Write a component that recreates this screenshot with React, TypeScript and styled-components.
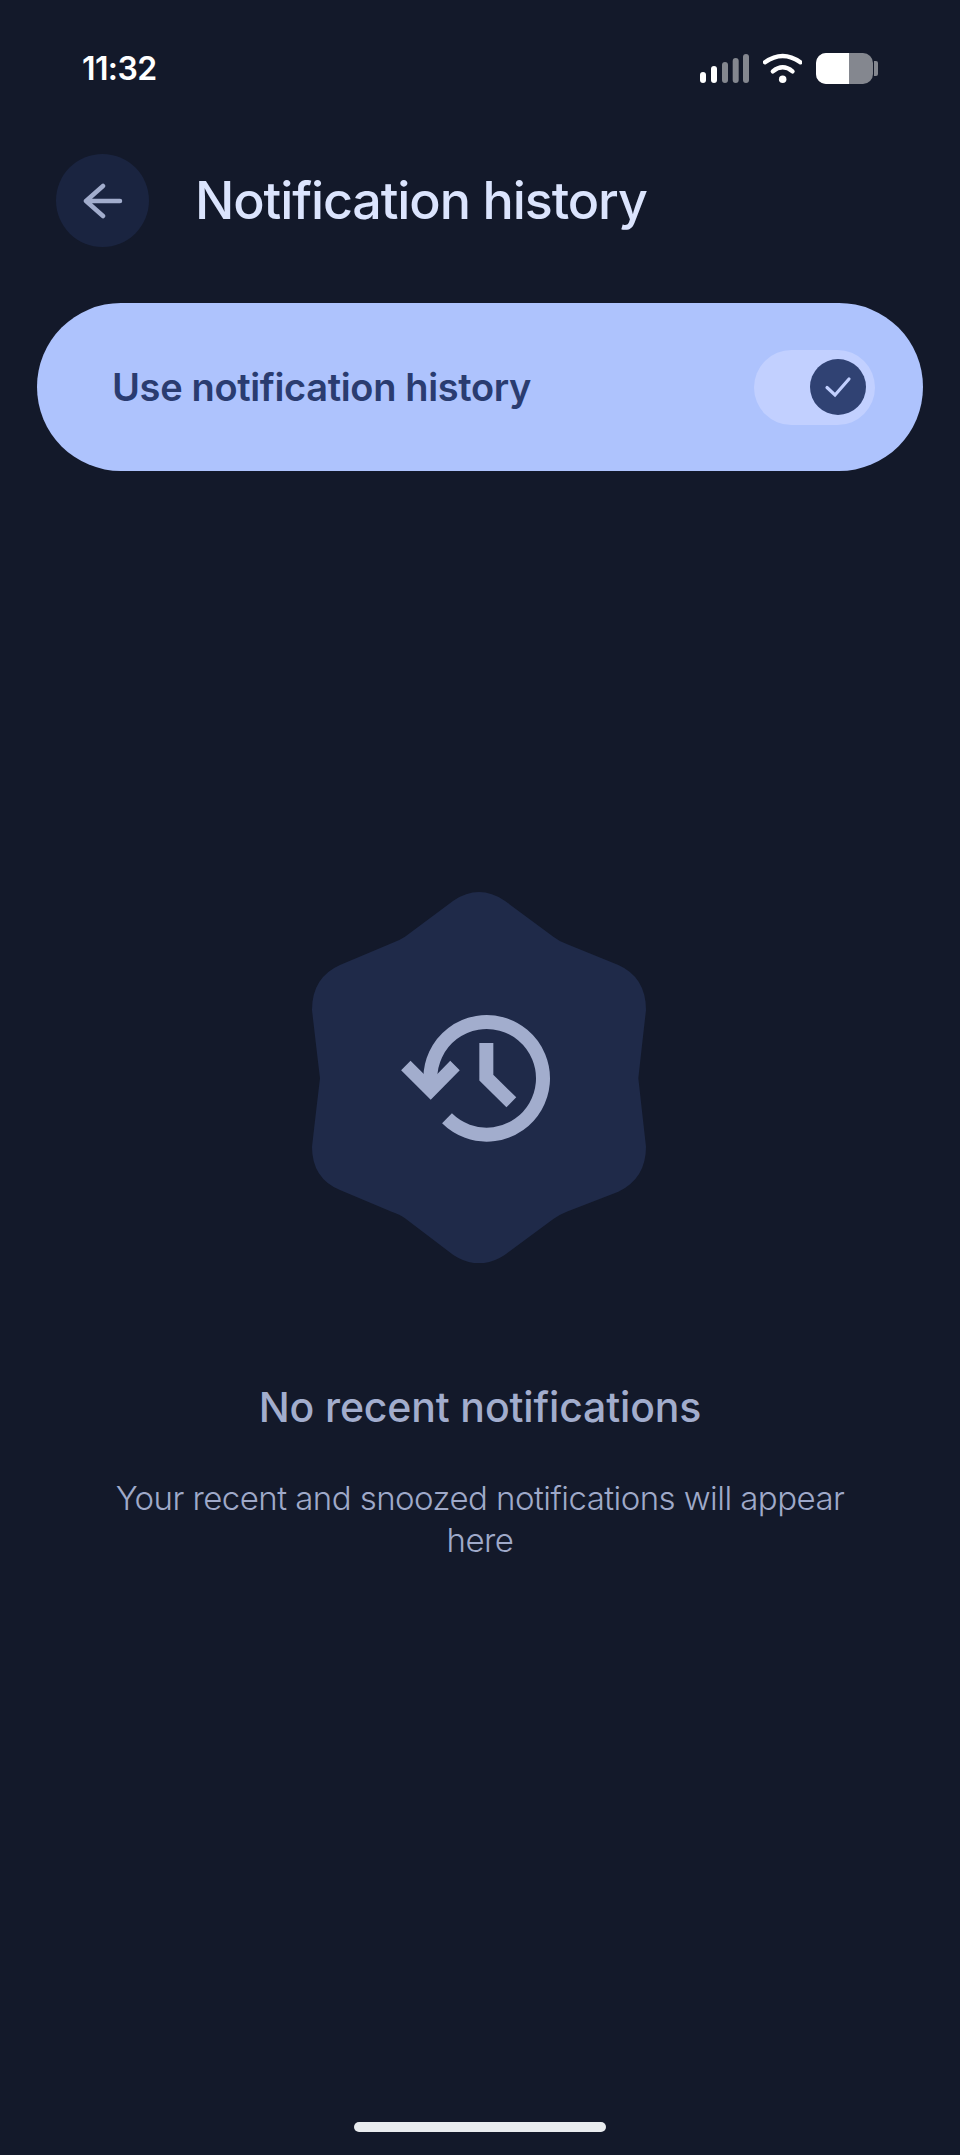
import React from "react";
import styled, { createGlobalStyle } from "styled-components";

const GlobalStyle = createGlobalStyle`
	html, body {
		margin: 0;
		padding: 0;
		background: #13192a;
	}
`;

const Screen = styled.div`
	width: 960px;
	height: 2155px;
	display: flex;
	flex-direction: column;
	align-items: stretch;
	background: #13192a;
	font-family: "Inter", "Liberation Sans", sans-serif;
	overflow: hidden;
`;

const StatusBar = styled.div`
	height: 136px;
	padding: 0 82px;
	box-sizing: border-box;
	display: flex;
	align-items: center;
	justify-content: space-between;
`;

const Time = styled.span`
	font-size: 32px;
	font-weight: 600;
	letter-spacing: -0.6px;
	color: #ffffff;
`;

const StatusIcons = styled.div`
	display: flex;
	align-items: center;
	gap: 14px;
`;

const Battery = styled.div`
	display: flex;
	align-items: center;
	gap: 1px;
`;

const BatteryBody = styled.div`
	width: 57px;
	height: 31px;
	border-radius: 10px;
	overflow: hidden;
	display: flex;
	background: #84878f;
`;

const BatteryFill = styled.div<{ $level: number }>`
	width: ${(p) => p.$level}%;
	background: #ffffff;
`;

const BatteryNub = styled.div`
	width: 4px;
	height: 15px;
	border-radius: 0 2px 2px 0;
	background: #84878f;
`;

const Header = styled.header`
	margin-top: 18px;
	padding-left: 56px;
	display: flex;
	align-items: center;
	gap: 46px;
`;

const BackButton = styled.div`
	width: 93px;
	height: 93px;
	border-radius: 50%;
	background: #1a2440;
	display: flex;
	align-items: center;
	justify-content: center;
`;

const Title = styled.h1`
	margin: 0;
	font-size: 52px;
	font-weight: 450;
	letter-spacing: -1.1px;
	line-height: 93px;
	color: #dbe4fd;
`;

const ToggleCard = styled.div`
	margin: 56px 37px 0;
	height: 168px;
	padding: 0 48px 0 75px;
	border-radius: 84px;
	background: #aec3fd;
	display: flex;
	align-items: center;
	justify-content: space-between;
`;

const ToggleLabel = styled.span`
	font-size: 38px;
	font-weight: 600;
	letter-spacing: -0.35px;
	color: #2a3c70;
`;

const Switch = styled.div`
	width: 121px;
	height: 75px;
	padding-right: 9px;
	box-sizing: border-box;
	border-radius: 38px;
	background: #c2d0ff;
	display: flex;
	align-items: center;
	justify-content: flex-end;
`;

const Thumb = styled.div`
	width: 56px;
	height: 56px;
	border-radius: 50%;
	background: #304273;
	display: flex;
	align-items: center;
	justify-content: center;
`;

const EmptyState = styled.section`
	margin-top: 421px;
	display: flex;
	flex-direction: column;
	align-items: center;
`;

const Badge = styled.svg`
	width: 334px;
	height: 371px;
	margin-left: -2px;
`;

const EmptyTitle = styled.h2`
	margin: 119px 0 0;
	font-size: 41px;
	font-weight: 500;
	letter-spacing: -0.15px;
	line-height: 50px;
	color: #a2adcd;
`;

const EmptyText = styled.p`
	margin: 45px 0 0;
	width: 760px;
	font-size: 33px;
	font-weight: 300;
	letter-spacing: -0.55px;
	line-height: 42px;
	text-align: center;
	color: #9fa9c9;
`;

const HomeIndicator = styled.div`
	margin: auto auto 23px;
	width: 252px;
	height: 10px;
	border-radius: 5px;
	background: #e9ecef;
`;

const bars = [
	{ x: 0, h: 11, on: true },
	{ x: 11, h: 17, on: true },
	{ x: 22, h: 21, on: false },
	{ x: 32.7, h: 25, on: false },
	{ x: 43, h: 29, on: false },
];

const SignalIcon = () => (
	<svg width="49" height="29" viewBox="0 0 49 29">
		{bars.map((b) => (
			<rect
				key={b.x}
				x={b.x}
				y={29 - b.h}
				width="6"
				height={b.h}
				rx="3"
				fill={b.on ? "#ffffff" : "#84878f"}
			/>
		))}
	</svg>
);

const WifiIcon = () => (
	<svg width="39" height="30" viewBox="310 70 115 88" fill="none" stroke="#ffffff" strokeWidth="13" strokeLinecap="round">
		<path d="M316 97Q368 60 420 97" />
		<path d="M339 124Q368 100 397 124" />
		<circle cx="368" cy="147" r="11" fill="#ffffff" stroke="none" />
	</svg>
);

const BackIcon = () => (
	<svg width="40" height="36" viewBox="0 0 40 36" fill="none" stroke="#a2adcd" strokeWidth="4.5" strokeLinecap="round" strokeLinejoin="round">
		<path d="M37 18H3M20 3L3 18L20 33" />
	</svg>
);

const CheckIcon = () => (
	<svg width="28" height="22" viewBox="0 0 28 22" fill="none" stroke="#c2d0ff" strokeWidth="3.2" strokeLinecap="round" strokeLinejoin="miter">
		<path d="M3 11.5L11 19L25 3" />
	</svg>
);

const App: React.FC = () => {
	return (
		<Screen>
			<GlobalStyle />
			<StatusBar>
				<Time>11:32</Time>
				<StatusIcons>
					<SignalIcon />
					<WifiIcon />
					<Battery>
						<BatteryBody>
							<BatteryFill $level={58} />
						</BatteryBody>
						<BatteryNub />
					</Battery>
				</StatusIcons>
			</StatusBar>
			<Header>
				<BackButton>
					<BackIcon />
				</BackButton>
				<Title>Notification history</Title>
			</Header>
			<ToggleCard>
				<ToggleLabel>Use notification history</ToggleLabel>
				<Switch>
					<Thumb>
						<CheckIcon />
					</Thumb>
				</Switch>
			</ToggleCard>
			<EmptyState>
				<Badge viewBox="66 66 1002 1113">
					<path
						fill="#1f2a49"
						d="M490 92Q567 40 644 92L790 200Q805 212 830 222L985 285Q1068 322 1068 420Q1056 525 1045 625Q1056 725 1068 830Q1068 925 985 965L830 1025Q805 1035 790 1047L644 1155Q567 1205 490 1155L345 1045Q330 1033 305 1025L150 960Q66 925 66 830Q78 725 90 625Q78 525 66 420Q66 322 150 285L305 220Q330 210 345 200Z"
					/>
					<g fill="none" stroke="#a2adcd" strokeWidth="42">
						<path d="M421 655V624A169 169 0 1 1 471 745" />
						<path d="M347.5 586.5L422 661L495 586.5" strokeWidth="40" />
						<path d="M589 519V623L664 697" />
					</g>
				</Badge>
				<EmptyTitle>No recent notifications</EmptyTitle>
				<EmptyText>Your recent and snoozed notifications will appear here</EmptyText>
			</EmptyState>
			<HomeIndicator />
		</Screen>
	);
};

export default App;
